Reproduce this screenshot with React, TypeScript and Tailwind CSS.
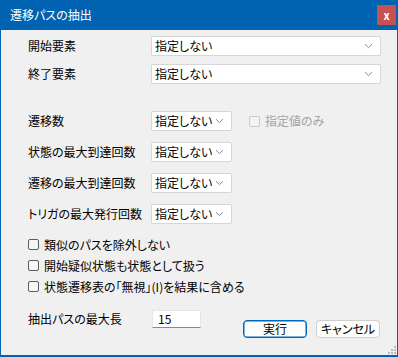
import React from 'react'

const font = "[font-family:'Noto_Sans_CJK_JP','Noto_Sans',sans-serif] [font-feature-settings:'palt']"

function Chevron() {
  return (
    <svg width="9" height="6" viewBox="0 0 9 6" className="shrink-0">
      <path d="M1 1.2 L4.5 4.6 L8 1.2" fill="none" stroke="#8a8a8a" strokeWidth="1" />
    </svg>
  )
}

function Select({ wide }: { wide?: boolean }) {
  return (
    <div
      className={`flex h-[20px] items-center justify-between rounded-[2px] border border-[#d6d6d6] bg-white pl-[3px] pr-[7px] ${
        wide ? 'w-[230px]' : 'w-[81px]'
      }`}
    >
      <span className="text-[12px] leading-none text-black">指定しない</span>
      <Chevron />
    </div>
  )
}

function Row({ label, wide, children }: { label: string; wide?: boolean; children?: React.ReactNode }) {
  return (
    <div className="flex items-center">
      <span className="w-[123px] text-[12px] leading-none text-black">{label}</span>
      <Select wide={wide} />
      {children}
    </div>
  )
}

function Check({ label }: { label: string }) {
  return (
    <div className="flex h-[21px] items-center">
      <span className="h-[11px] w-[11px] rounded-[2px] border border-[#5c5c5c] bg-[#f6f6f6]" />
      <span className="ml-[5px] text-[12px] leading-none text-black">{label}</span>
    </div>
  )
}

export default function App() {
  return (
    <div className={`flex h-[357px] w-[398px] flex-col bg-[#0063b1] px-[1px] pb-[2px] ${font}`}>
      {/* title bar */}
      <div className="flex h-[30px] shrink-0 items-center justify-between pl-[9px] pr-[1px]">
        <span className="text-[12px] leading-none text-white">遷移パスの抽出</span>
        <div className="flex h-[20px] w-[19px] items-center justify-center bg-[#c75050] text-[11px] font-bold leading-none text-white">
          x
        </div>
      </div>

      {/* body */}
      <div className="relative flex flex-1 flex-col bg-[#f0f0f0] pl-[27px] pr-[16px] pt-[6px]">
        <div className="flex flex-col gap-[8px]">
          <Row label="開始要素" wide />
          <Row label="終了要素" wide />
        </div>

        <div className="mt-[27px] flex flex-col gap-[11px]">
          <Row label="遷移数">
            <span className="ml-[17px] h-[11px] w-[11px] rounded-[2px] border border-[#c8c8c8] bg-[#f4f4f4]" />
            <span className="ml-[5px] text-[12px] leading-none text-[#a3a3a3]">指定値のみ</span>
          </Row>
          <Row label="状態の最大到達回数" />
          <Row label="遷移の最大到達回数" />
          <Row label="トリガの最大発行回数" />
        </div>

        <div className="mt-[10px] flex flex-col">
          <Check label="類似のパスを除外しない" />
          <Check label="開始疑似状態も状態として扱う" />
          <Check label="状態遷移表の「無視」(I)を結果に含める" />
        </div>

        <div className="mt-[13px] flex items-start">
          <span className="mt-[3px] w-[124px] text-[12px] leading-none text-black">抽出パスの最大長</span>
          <div className="flex h-[18px] w-[49px] items-center border border-b-[#8a8a8a] border-l-[#e6e6e6] border-r-[#e6e6e6] border-t-[#e6e6e6] bg-white pl-[5px] text-[12px] leading-none text-black">
            15
          </div>
          <div className="ml-auto mr-[1px] mt-[10px] flex gap-[9px]">
            <button className="flex h-[18px] w-[64px] items-center justify-center rounded-[4px] border border-[#0067c0] bg-[#fdfdfd] text-[12px] leading-none text-black shadow-[inset_0_0_0_0.5px_#0067c0]">
              実行
            </button>
            <button className="flex h-[18px] w-[64px] items-center justify-center rounded-[4px] border border-[#cfcfcf] bg-[#fdfdfd] text-[12px] leading-none text-black">
              キャンセル
            </button>
          </div>
        </div>

        {/* resize grip */}
        <svg width="8" height="8" viewBox="0 0 8 8" className="absolute bottom-[1px] right-[1px]">
          <rect x="6" y="0" width="2" height="2" fill="#bdbdbd" />
          <rect x="3" y="3" width="2" height="2" fill="#bdbdbd" />
          <rect x="6" y="3" width="2" height="2" fill="#bdbdbd" />
          <rect x="0" y="6" width="2" height="2" fill="#bdbdbd" />
          <rect x="3" y="6" width="2" height="2" fill="#bdbdbd" />
          <rect x="6" y="6" width="2" height="2" fill="#bdbdbd" />
        </svg>
      </div>
    </div>
  )
}
